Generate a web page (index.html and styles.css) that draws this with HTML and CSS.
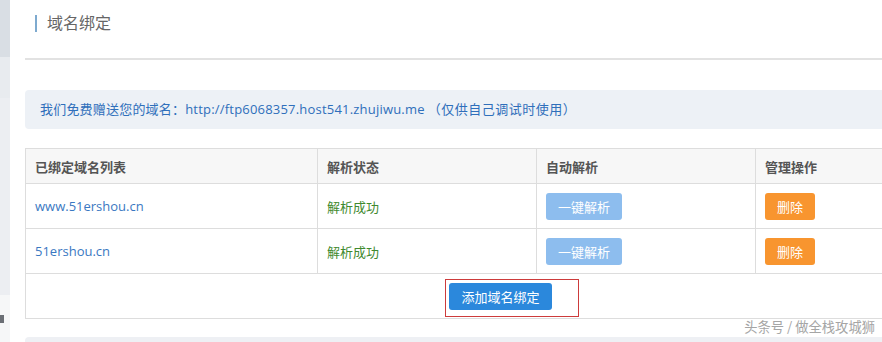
FILE: index.html
```html
<!DOCTYPE html>
<html>
<head>
	<meta charset="utf-8">
	<title>域名绑定</title>
	<link rel="stylesheet" href="styles.css">
</head>
<body>
	<div class="page">
		<div class="side">
			<div class="side-a"></div>
			<div class="side-b"></div>
			<div class="side-c"></div>
			<div class="side-d"><span class="side-icon"></span></div>
		</div>
		<div class="main">
			<div class="title"><span class="title-bar"></span>域名绑定</div>
			<div class="rule"></div>
			<div class="notice">我们免费赠送您的域名：http://ftp6068357.host541.zhujiwu.me<span class="paren">（仅供自己调试时使用）</span></div>
			<table class="bind">
				<tr>
					<th class="c1">已绑定域名列表</th>
					<th class="c2">解析状态</th>
					<th class="c3">自动解析</th>
					<th class="c4">管理操作</th>
				</tr>
				<tr>
					<td><a href="#">www.51ershou.cn</a></td>
					<td class="ok">解析成功</td>
					<td><button class="btn btn-parse">一键解析</button></td>
					<td><button class="btn btn-del">删除</button></td>
				</tr>
				<tr>
					<td><a href="#">51ershou.cn</a></td>
					<td class="ok">解析成功</td>
					<td><button class="btn btn-parse">一键解析</button></td>
					<td><button class="btn btn-del">删除</button></td>
				</tr>
				<tr>
					<td colspan="4" class="foot">
						<span class="mark"><button class="btn btn-add">添加域名绑定</button></span>
					</td>
				</tr>
			</table>
			<div class="next-panel"></div>
		</div>
		<div class="watermark">头条号 / 做全栈攻城狮</div>
	</div>
</body>
</html>
```
FILE: styles.css
```css
* {
	box-sizing: border-box;
}
body {
	margin: 0;
	overflow: hidden;
	background: #fff;
	font-family: "Open Sans", "Noto Sans CJK SC", sans-serif;
	font-size: 13px;
}
.page {
	position: relative;
	display: flex;
	width: 882px;
	height: 342px;
	overflow: hidden;
}
.side {
	width: 10px;
	flex-shrink: 0;
}
.side-a {
	height: 57px;
	background: #d9dee4;
}
.side-b {
	height: 41px;
	background: #e8ebef;
}
.side-c {
	height: 197px;
	background: #eceef2;
}
.side-d {
	height: 47px;
	background: #f6f7f8;
	padding-top: 20px;
}
.side-icon {
	display: block;
	width: 4px;
	height: 8px;
	background: #6b6f75;
}
.main {
	width: 950px;
	flex-shrink: 0;
	margin-left: 15px;
}
.title {
	height: 58px;
	padding-top: 12px;
	font-size: 16px;
	line-height: 22px;
	color: #666;
}
.title-bar {
	display: inline-block;
	width: 2px;
	height: 17px;
	margin-left: 10px;
	margin-right: 10px;
	vertical-align: -3px;
	background: #7eaacf;
}
.rule {
	height: 2px;
	background: #e2e2e2;
}
.notice {
	margin-top: 30px;
	height: 39px;
	line-height: 39px;
	padding-left: 15px;
	border-radius: 4px;
	background: #edf1f6;
	color: #2f6fbb;
	letter-spacing: 0.2px;
}
.paren {
	margin-left: 3px;
	letter-spacing: 0.5px;
}
.bind {
	margin-top: 19px;
	width: 950px;
	border-collapse: collapse;
	border: 1px solid #ddd;
	table-layout: fixed;
}
.bind th, .bind td {
	border: 1px solid #ddd;
	padding: 0 9px;
	text-align: left;
}
.bind th {
	height: 35px;
	background: #f7f7f7;
	color: #555;
	font-weight: bold;
}
.bind td {
	height: 45px;
}
.c1 { width: 292px; }
.c2 { width: 219px; }
.c3 { width: 219px; }
.c4 { width: 220px; }
.bind a {
	color: #3a78c2;
	text-decoration: none;
}
.ok {
	color: #3f8a2f;
}
.btn {
	height: 27px;
	padding: 0 12px;
	border: none;
	border-radius: 3px;
	color: #fff;
	font-family: "Noto Sans CJK SC", sans-serif;
	font-size: 13px;
	vertical-align: middle;
}
.btn-parse {
	background: #8dbdee;
}
.btn-del {
	background: #f8952f;
}
.bind td.foot {
	text-align: center;
}
.mark {
	position: relative;
	display: inline-block;
}
.mark::after {
	content: "";
	position: absolute;
	left: -4px;
	top: -4px;
	width: 132px;
	height: 36px;
	border: 1px solid #cd3b3b;
}
.btn-add {
	width: 103px;
	background: #2b88dc;
	vertical-align: top;
}
.next-panel {
	margin-top: 18px;
	height: 30px;
	border-radius: 4px;
	background: #eef0f4;
}
.watermark {
	position: absolute;
	right: 7px;
	bottom: 6px;
	font-family: "Noto Sans CJK SC", sans-serif;
	font-size: 13.3px;
	color: #a5a5a5;
	text-shadow: 0 0 2px #fff;
}
```
